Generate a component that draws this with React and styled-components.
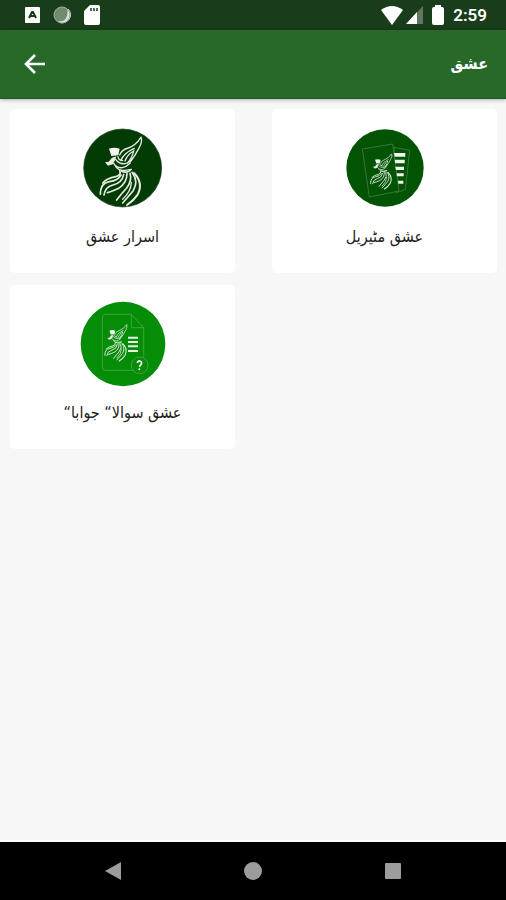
import styled, { createGlobalStyle } from "styled-components";

const GlobalStyle = createGlobalStyle`
  * {
    box-sizing: border-box;
  }

  body {
    margin: 0;
    background: #f7f7f7;
  }
`;

const Screen = styled.div`
  display: flex;
  flex-direction: column;
  min-height: 100vh;
  background: #f7f7f7;
  font-family: "DejaVu Sans Condensed", "DejaVu Sans", sans-serif;
`;

const StatusBar = styled.div`
  display: flex;
  justify-content: space-between;
  align-items: center;
  height: 30px;
  padding: 0 19px 0 25px;
  background: #193c1a;
  color: white;
`;

const StatusGroup = styled.div`
  display: flex;
  align-items: center;
  gap: ${(props) => props.$gap}px;

  svg {
    display: block;
  }
`;

const Clock = styled.time`
  font-family: Roboto, sans-serif;
  font-size: 17px;
  line-height: 30px;
  font-weight: 600;
`;

const Header = styled.header`
  display: flex;
  justify-content: space-between;
  align-items: center;
  height: 69px;
  padding: 0 18px 0 19px;
  background: #28692a;
  border-bottom: 1px solid #125b18;
  box-shadow: 0 1px 4px rgba(0, 0, 0, 0.3);
  color: white;
`;

const BackButton = styled.button`
  display: flex;
  padding: 4px;
  border: none;
  background: transparent;
  color: white;
  cursor: pointer;
`;

const Title = styled.h1`
  margin: 0;
  font-size: 16px;
  line-height: 32px;
  font-weight: bold;
`;

const Grid = styled.main`
  flex: 1;
  display: grid;
  grid-template-columns: 1fr 1fr;
  align-content: start;
  gap: 12px 37px;
  padding: 10px 9px 10px 10px;
`;

const Card = styled.button`
  display: flex;
  flex-direction: column;
  align-items: center;
  gap: 10px;
  height: 164px;
  padding: 16px 8px;
  border: none;
  border-radius: 5px;
  background: white;
  color: #222;
  font-family: inherit;
  cursor: pointer;

  svg {
    display: block;
  }
`;

const Label = styled.span`
  font-size: 16px;
  line-height: 32px;
`;

const NavBar = styled.nav`
  display: flex;
  justify-content: space-between;
  height: 60px;
  padding: 0 89px;
  border-top: 2px solid white;
  background: black;
`;

const NavButton = styled.button`
  display: flex;
  justify-content: center;
  align-items: center;
  width: 48px;
  padding: 0;
  border: none;
  background: transparent;
  color: #9c9c9c;
  cursor: pointer;
`;

function Dervish(props) {
  return (
    <g fill="none" stroke="#e6ece4" strokeWidth="5" strokeLinecap="round" {...props}>
      <path d="M110 85 Q125 79 142 85 L138 105 L117 107 Z" fill="#f2f5f0" stroke="none" />
      <path d="M98 126 L109 124 L119 112 L132 108 L128 120 L121 132 L107 136 Z" fill="#e6ece4" stroke="none" />
      <g strokeWidth="4">
        <path d="M142 104 Q148 88 168 83 Q190 75 206 51 Q212 62 199 85 Q188 107 173 126" />
        <path d="M146 120 Q153 99 186 84 M158 122 Q164 104 184 92 Q181 108 166 128" />
        <path d="M130 117 Q140 132 158 130 Q170 128 180 113" />
        <path d="M124 129 Q133 144 150 142 Q162 140 173 129 M137 109 Q138 120 151 121" />
        <path d="M130 139 Q141 153 158 150 L177 147" />
      </g>
      <path d="M142 151 Q148 163 130 169 Q104 174 91 188 M146 164 Q137 181 111 184 Q84 188 84 222" />
      <path d="M154 163 Q149 188 122 194 Q99 199 95 224" />
      <path d="M164 159 Q164 188 139 204 Q118 214 105 217" />
      <path d="M173 159 Q180 181 163 203 Q149 218 133 239" />
      <path d="M179 156 Q200 184 182 212 Q166 231 151 248" />
      <path d="M185 158 Q214 187 196 223 Q184 241 164 254" strokeWidth="6" />
      <path d="M147 152 Q160 160 174 150" />
      <path d="M177 186 Q177 212 151 237" strokeWidth="4" />
    </g>
  );
}

function SecretsIcon() {
  return (
    <svg width="86" height="86" viewBox="23 14 258 258" aria-hidden="true">
      <circle cx="151" cy="143" r="117" fill="#023b04" stroke="#213d20" strokeWidth="2" />
      <Dervish />
    </svg>
  );
}

function MaterialIcon() {
  return (
    <svg width="86" height="86" viewBox="17 11 258 258" aria-hidden="true">
      <circle cx="146" cy="140" r="116" fill="#025404" />
      <g fill="#025404" stroke="#548553" strokeWidth="2">
        <path d="M173 78 L220 87 L207 205 L180 214 Z" />
        <path d="M78 83 L169 68 L188 209 L99 227 Z" />
      </g>
      <g fill="#f2f6f0">
        <path d="M173 95 H207 V106 H175 Z" />
        <path d="M175 115 H205 V126 H177 Z" />
        <path d="M177 136 H203 V146 H179 Z" />
        <path d="M181 156 H202 V165 H182 Z" />
        <path d="M185 178 H201 V187 H186 Z" />
      </g>
      <Dervish transform="translate(59 71) scale(0.52 0.52)" />
    </svg>
  );
}

function QuestionsIcon() {
  return (
    <svg width="86" height="86" viewBox="24 18 258 258" aria-hidden="true">
      <circle cx="153" cy="147" r="127" fill="#068d08" />
      <g fill="none" stroke="#58ad57" strokeWidth="2">
        <path d="M178 58 H101 Q91 58 91 69 V216 Q91 226 102 226 H186 M178 58 L215 98 V186 M178 58 V98 H215" />
        <circle cx="203" cy="211" r="25" />
      </g>
      <path d="M168 128 H198 M168 141 H198 M168 154 H198 M168 168 H198" stroke="#e5f3e2" strokeWidth="6" />
      <Dervish transform="translate(53 61) scale(0.54 0.54)" />
      <path d="M196 204 Q197 197 203 198 Q210 199 208 207 L202 215" fill="none" stroke="white" strokeWidth="5" />
      <circle cx="202" cy="223" r="3" fill="white" />
    </svg>
  );
}

const items = [
  { label: "اسرار عشق", Icon: SecretsIcon },
  { label: "عشق مٹیریل", Icon: MaterialIcon },
  { label: "عشق سوالا“ جوابا“", Icon: QuestionsIcon },
];

function App() {
  return (
    <Screen>
      <GlobalStyle />
      <StatusBar>
        <StatusGroup $gap={12}>
          <svg width="15" height="16" viewBox="0 0 15 16" aria-hidden="true">
            <rect width="15" height="16" rx="1" fill="white" />
            <path d="M4 11 L7 5 H8 L11 11 M5 9 H10" fill="none" stroke="#193c1a" strokeWidth="2" />
          </svg>
          <svg width="20" height="20" viewBox="0 0 20 20" aria-hidden="true">
            <circle cx="10" cy="10" r="8" fill="#6f8c70" />
            <path d="M16 4 A8 8 0 0 1 7 17 Q17 17 16 4 Z" fill="#d5e0d4" stroke="#d5e0d4" />
            <circle cx="10" cy="10" r="8" fill="none" stroke="#9bb09b" />
          </svg>
          <svg width="16" height="20" viewBox="0 0 16 20" aria-hidden="true">
            <path d="M6 0 H14 Q16 0 16 2 V18 Q16 20 14 20 H2 Q0 20 0 18 V6 Z" fill="white" />
            <path d="M7 3 V6 M10 3 V6 M13 3 V6" stroke="#193c1a" strokeWidth="1.5" />
          </svg>
        </StatusGroup>
        <StatusGroup $gap={9}>
          <StatusGroup $gap={3}>
            <svg width="22" height="19" viewBox="0 0 22 19" aria-hidden="true">
              <path d="M0 4 Q11 -4 22 4 L11 19 Z" fill="white" />
            </svg>
            <svg width="17" height="18" viewBox="0 0 17 18" aria-hidden="true">
              <path d="M17 0 V18 H0 Z" fill="#5e775e" />
              <path d="M11 6 V18 H0 Z" fill="white" />
            </svg>
          </StatusGroup>
          <svg width="12" height="20" viewBox="0 0 12 20" aria-hidden="true">
            <path d="M3 0 H9 V2 H10 Q12 2 12 4 V18 Q12 20 10 20 H2 Q0 20 0 18 V4 Q0 2 2 2 H3 Z" fill="white" />
          </svg>
          <Clock>2:59</Clock>
        </StatusGroup>
      </StatusBar>
      <Header>
        <BackButton aria-label="Back">
          <svg width="24" height="24" viewBox="0 0 24 24" aria-hidden="true">
            <path d="M22 12 H4 M12 3 L3 12 L12 21" fill="none" stroke="white" strokeWidth="2.6" />
          </svg>
        </BackButton>
        <Title lang="ur" dir="rtl">عشق</Title>
      </Header>
      <Grid>
        {items.map(({ label, Icon }) => (
          <Card key={label}>
            <Icon />
            <Label lang="ur" dir="rtl">{label}</Label>
          </Card>
        ))}
      </Grid>
      <NavBar>
        <NavButton aria-label="Back">
          <svg width="16" height="18" viewBox="0 0 16 18" fill="currentColor" aria-hidden="true">
            <path d="M16 0 V18 L0 9 Z" />
          </svg>
        </NavButton>
        <NavButton aria-label="Home">
          <svg width="18" height="18" viewBox="0 0 18 18" fill="currentColor" aria-hidden="true">
            <circle cx="9" cy="9" r="9" />
          </svg>
        </NavButton>
        <NavButton aria-label="Recent apps">
          <svg width="16" height="16" viewBox="0 0 16 16" fill="currentColor" aria-hidden="true">
            <rect width="16" height="16" rx="1" />
          </svg>
        </NavButton>
      </NavBar>
    </Screen>
  );
}

export default App;
